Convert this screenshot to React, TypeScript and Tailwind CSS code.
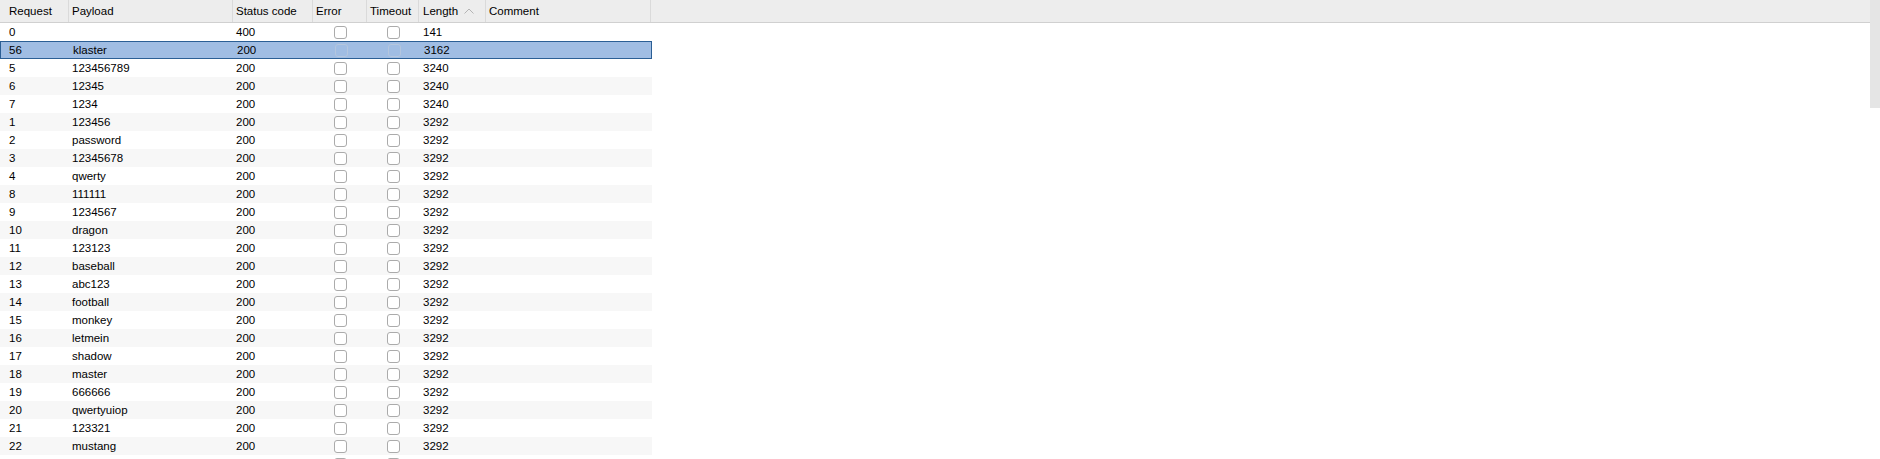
import React from 'react';

type Row = { req: string; payload: string; status: string; length: string };

const rows: Row[] = [
    { req: '0', payload: '', status: '400', length: '141' },
    { req: '56', payload: 'klaster', status: '200', length: '3162' },
    { req: '5', payload: '123456789', status: '200', length: '3240' },
    { req: '6', payload: '12345', status: '200', length: '3240' },
    { req: '7', payload: '1234', status: '200', length: '3240' },
    { req: '1', payload: '123456', status: '200', length: '3292' },
    { req: '2', payload: 'password', status: '200', length: '3292' },
    { req: '3', payload: '12345678', status: '200', length: '3292' },
    { req: '4', payload: 'qwerty', status: '200', length: '3292' },
    { req: '8', payload: '111111', status: '200', length: '3292' },
    { req: '9', payload: '1234567', status: '200', length: '3292' },
    { req: '10', payload: 'dragon', status: '200', length: '3292' },
    { req: '11', payload: '123123', status: '200', length: '3292' },
    { req: '12', payload: 'baseball', status: '200', length: '3292' },
    { req: '13', payload: 'abc123', status: '200', length: '3292' },
    { req: '14', payload: 'football', status: '200', length: '3292' },
    { req: '15', payload: 'monkey', status: '200', length: '3292' },
    { req: '16', payload: 'letmein', status: '200', length: '3292' },
    { req: '17', payload: 'shadow', status: '200', length: '3292' },
    { req: '18', payload: 'master', status: '200', length: '3292' },
    { req: '19', payload: '666666', status: '200', length: '3292' },
    { req: '20', payload: 'qwertyuiop', status: '200', length: '3292' },
    { req: '21', payload: '123321', status: '200', length: '3292' },
    { req: '22', payload: 'mustang', status: '200', length: '3292' },
    // next row is scrolled below the fold: only the checkbox tops show
    { req: '', payload: '', status: '', length: '' },
];

const SELECTED = 1;

function Check({ selected }: { selected: boolean }) {
    return (
        <div
            className={
                selected
                    ? 'h-[13px] w-[13px] rounded-[3px] border border-[#b4c6de] bg-transparent'
                    : 'h-[13px] w-[13px] rounded-[3px] border border-[#ababab] bg-white'
            }
        />
    );
}

const cols = 'grid grid-cols-[69px_164px_80px_54px_52px_67px_166px]';

export default function App() {
    return (
        <div className="flex h-[459px] w-[1880px] overflow-hidden bg-white font-['Segoe_UI','Liberation_Sans',sans-serif] text-[11.5px] text-black">
            <div className="flex min-w-0 flex-1 flex-col">
                {/* column headers */}
                <div className="flex h-[23px] shrink-0 border-b border-[#d0d0d0] bg-[#ededed]">
                    <div className="grid grid-cols-[69px_164px_80px_54px_52px_67px_165px] leading-[22px]">
                        <div className="border-r border-[#dadada] pl-[9px]">Request</div>
                        <div className="border-r border-[#dadada] pl-[3px]">Payload</div>
                        <div className="border-r border-[#dadada] pl-[3px]">Status code</div>
                        <div className="border-r border-[#dadada] pl-[3px]">Error</div>
                        <div className="border-r border-[#dadada] pl-[3px]">Timeout</div>
                        <div className="flex items-center gap-[6px] border-r border-[#dadada] pl-[4px]">
                            <span>Length</span>
                            <svg width="10" height="6" viewBox="0 0 10 6" fill="none">
                                <path d="M0.5 5.5 L5 1 L9.5 5.5" stroke="#b4b4b4" strokeWidth="1" />
                            </svg>
                        </div>
                        <div className="border-r border-[#dadada] pl-[3px]">Comment</div>
                    </div>
                </div>

                {/* rows */}
                <div className="flex flex-col">
                    {rows.map((r, i) => {
                        const sel = i === SELECTED;
                        const bg = sel
                            ? 'border border-[#2b5f95] bg-[#a0bde3]'
                            : i % 2 === 0
                              ? 'bg-white'
                              : 'bg-[#f7f7f7]';
                        return (
                            <div key={i} className={`${cols} h-[18px] w-[652px] shrink-0 leading-[16px] ${bg} ${sel ? '' : 'py-[1px]'}`}>
                                <div className={sel ? 'pl-[8px]' : 'pl-[9px]'}>{r.req}</div>
                                <div className="pl-[3px]">{r.payload}</div>
                                <div className="pl-[3px]">{r.status}</div>
                                <div className="flex items-center justify-center">
                                    <Check selected={sel} />
                                </div>
                                <div className="flex items-center justify-center">
                                    <Check selected={sel} />
                                </div>
                                <div className="pl-[4px]">{r.length}</div>
                                <div />
                            </div>
                        );
                    })}
                </div>
            </div>

            {/* vertical scrollbar */}
            <div className="flex w-[10px] shrink-0 flex-col">
                <div className="h-[108px] bg-[#e5e5e5]" />
            </div>
        </div>
    );
}
